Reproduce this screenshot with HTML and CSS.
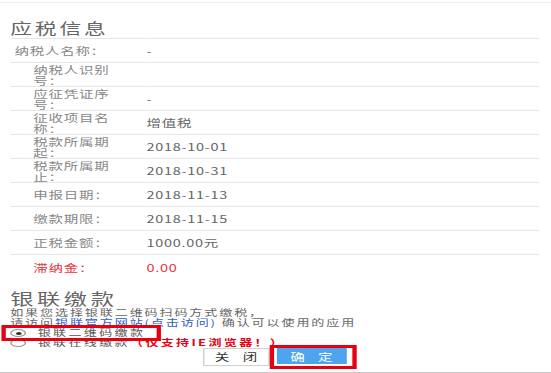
FILE: index.html
```html
<!DOCTYPE html>
<html>
<head>
<meta charset="utf-8">
<title>应税信息</title>
<link rel="stylesheet" href="styles.css">
</head>
<body>

<div class="dialog">
    <h2 class="section-title">应税信息</h2>

    <table class="info-table">
        <colgroup>
            <col class="col-label">
            <col>
        </colgroup>
        <tbody>
            <tr>
                <td class="label label-first">纳税人名称：</td>
                <td class="value">-</td>
            </tr>
            <tr>
                <td class="label">纳税人识别号：</td>
                <td class="value"></td>
            </tr>
            <tr>
                <td class="label">应征凭证序号：</td>
                <td class="value">-</td>
            </tr>
            <tr>
                <td class="label">征收项目名称：</td>
                <td class="value">增值税</td>
            </tr>
            <tr>
                <td class="label">税款所属期起：</td>
                <td class="value">2018-10-01</td>
            </tr>
            <tr>
                <td class="label">税款所属期止：</td>
                <td class="value">2018-10-31</td>
            </tr>
            <tr>
                <td class="label">申报日期：</td>
                <td class="value">2018-11-13</td>
            </tr>
            <tr>
                <td class="label">缴款期限：</td>
                <td class="value">2018-11-15</td>
            </tr>
            <tr>
                <td class="label">正税金额：</td>
                <td class="value">1000.00元</td>
            </tr>
            <tr>
                <td class="label red">滞纳金：</td>
                <td class="value red">0.00</td>
            </tr>
        </tbody>
    </table>

    <h2 class="section-title section-title-pay">银联缴款</h2>
    <p class="hint">如果您选择银联二维码扫码方式缴税，<br>请访问<a class="hint-link" href="#">银联官方网站(点击访问)</a> 确认可以使用的应用</p>

    <div class="pay-option is-selected">
        <span class="radio checked"></span>
        <span>银联二维码缴款</span>
    </div>
    <div class="pay-option">
        <span class="radio"></span>
        <span>银联在线缴款</span><span class="warn">（仅支持IE浏览器！）</span>
    </div>

    <div class="actions">
        <button class="btn">关 闭</button>
        <span class="btn-frame"><button class="btn btn-primary">确 定</button></span>
    </div>
</div>

</body>
</html>
```

FILE: styles.css
```css
body {
    margin: 0;
    padding-top: 2px;
    overflow: hidden;
    font-family: "Noto Sans CJK SC", "Noto Sans", sans-serif;
    color: #666;
    background-color: #fff;
}
/* the page is shown widened: lay it out narrow, stretch it sideways */
.dialog {
    width: 380px;
    transform: scale(1.45, 1);
    transform-origin: top left;
    border-top: 1px solid #eeeeee;
    border-bottom: 1px solid #c8c8c8;
    padding-bottom: 6px;
}
.section-title {
    margin: 0;
    padding: 14px 0 0 7px;
    font-size: 15px;
    line-height: 21px;
    font-weight: normal;
    letter-spacing: 2px;
    color: #666;
}
.section-title-pay {
    padding-top: 9px;
    font-size: 16px;
    line-height: 20px;
    letter-spacing: 2.5px;
}
.info-table {
    margin-left: 7px;
    width: 365px;
    table-layout: fixed;
    border-collapse: collapse;
    border-top: 1px solid #e6e6e6;
    font-size: 10px;
    line-height: 11px;
    letter-spacing: 0.5px;
}
.col-label {
    width: 94px;
}
.info-table td {
    height: 23px;
    padding: 0;
    border-bottom: 1px solid #e6e6e6;
    vertical-align: middle;
}
.info-table tr:last-child td {
    height: 24px;
    border-bottom: none;
}
.info-table td.label {
    padding: 0 21px 0 16px;
    color: #888;
}
.info-table td.label-first {
    padding-left: 3px;
    white-space: nowrap;
}
.value {
    color: #666;
}
.info-table td.red {
    color: #e8333a;
}
.hint {
    margin: 0;
    padding-left: 7px;
    font-size: 9px;
    line-height: 10px;
    letter-spacing: 1.3px;
    color: #666;
}
.hint-link {
    color: #2e5fc6;
    text-decoration: none;
}
.pay-option {
    display: flex;
    align-items: center;
    width: fit-content;
    height: 10px;
    margin-left: 4px;
    padding: 0 8px 0 3px;
    font-size: 9px;
    line-height: 10px;
    letter-spacing: 1.6px;
    color: #555;
}
.pay-option.is-selected {
    outline: 3px solid #e60012;
}
.radio {
    display: flex;
    align-items: center;
    justify-content: center;
    width: 9px;
    height: 6px;
    margin-right: 8px;
    border: 1px solid #999;
    border-radius: 50%;
    background-color: #fff;
}
.radio.checked::after {
    content: "";
    width: 4px;
    height: 3px;
    border-radius: 50%;
    background-color: #333;
}
.warn {
    color: #e60012;
    font-weight: bold;
}
.actions {
    display: flex;
    padding-left: 140px;
}
.btn {
    width: 46px;
    height: 18px;
    padding: 0 0 0 3px;
    border: 1px solid #d0d0d0;
    background-color: #fff;
    color: #333;
    font-family: inherit;
    font-size: 10px;
    line-height: 16px;
    letter-spacing: 3.5px;
    cursor: pointer;
}
.btn-frame {
    display: flex;
    align-items: flex-start;
    margin-left: 3px;
    padding: 0 4px 0 2px;
    outline: 3px solid #e60012;
    background-color: #fff;
}
.btn-primary {
    width: 48px;
    height: 16px;
    border-color: #4ea5ee;
    background-color: #4ea5ee;
    color: #fff;
}
```
